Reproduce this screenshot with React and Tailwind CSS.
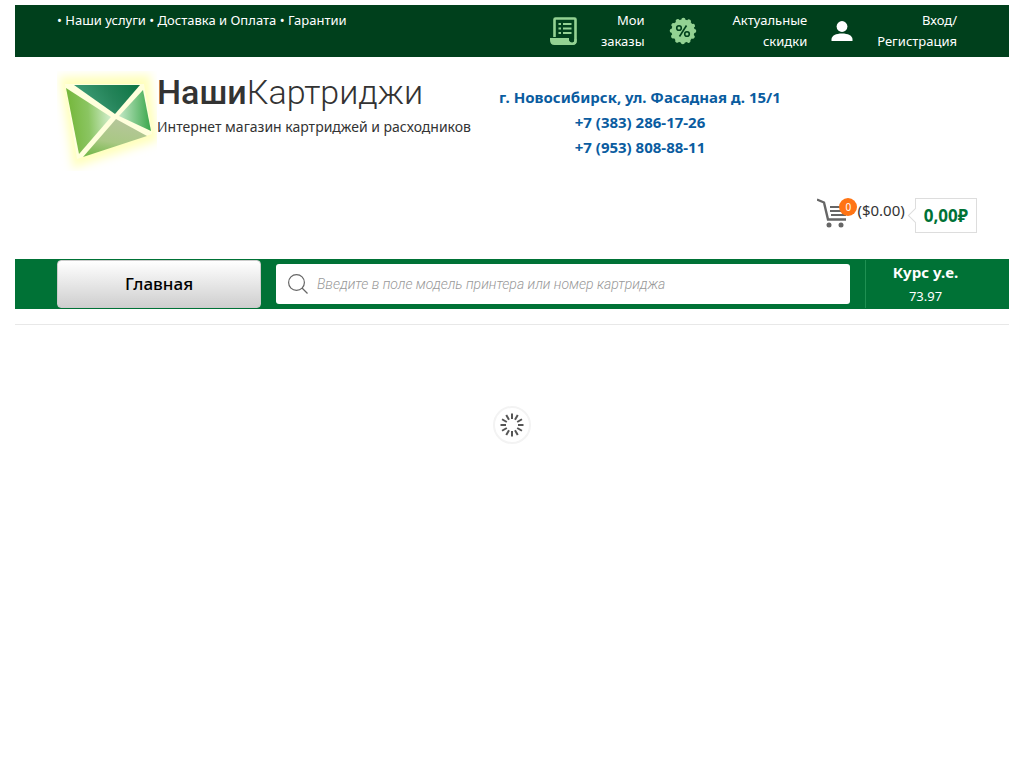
import React from "react";

const OrdersIcon = () => (
  <svg className="w-[27px] h-7 shrink-0" viewBox="0 0 27 28" fill="none" aria-hidden="true">
    <path d="M4.5 20V2.5Q4.500 1.500 5.500 1.500H24.500Q25.500 1.500 25.500 2.500V24Q25.500 26.500 23 26.500" stroke="#93d293" strokeWidth="2.600" />
    <path d="M0 21H19V23.500Q20 25.500 22 25.500Q24.500 25.500 24.500 22H26.500V24Q26.500 28 22.500 28H4.500Q0 28 0 23Z" fill="#93d293" />
    <path d="M8.500 7H11M8.500 11.500H11M8.500 16H11M13 7H21.500M13 11.500H21.500M13 16H21.500" stroke="#93d293" strokeWidth="2.200" />
  </svg>
);

const DiscountIcon = () => (
  <svg className="w-7 h-7 shrink-0" viewBox="0 0 28 28" fill="none" aria-hidden="true">
    <circle cx="14" cy="14" r="11.500" fill="#93d293" />
    <circle cx="14" cy="14" r="11.300" stroke="#93d293" strokeWidth="4" strokeLinecap="round" strokeDasharray="0.1 5.817" />
    <circle cx="10" cy="11" r="2.300" stroke="#00401c" strokeWidth="1.600" />
    <circle cx="18" cy="17" r="2.300" stroke="#00401c" strokeWidth="1.600" />
    <path d="M17.500 8.500L10.500 19.500" stroke="#00401c" strokeWidth="1.600" />
  </svg>
);

const UserIcon = () => (
  <svg className="w-[22px] h-5 shrink-0" viewBox="0 0 22 20" fill="#fff" aria-hidden="true">
    <circle cx="11" cy="5.500" r="5.400" />
    <path d="M0.500 20V18.500C0.500 14.500 5 12.500 11 12.500S21.500 14.500 21.500 18.500V20Z" />
  </svg>
);

const Logo = () => (
  <svg className="w-[100px] h-[100px] shrink-0" viewBox="0 0 100 100" aria-hidden="true">
    <defs>
      <filter id="glow" x="-20%" y="-20%" width="140%" height="140%">
        <feGaussianBlur stdDeviation="4" />
      </filter>
      <linearGradient id="top" x1="0" y1="0.300" x2="1" y2="0">
        <stop offset="0" stopColor="#3f9f78" />
        <stop offset="0.500" stopColor="#25845a" />
        <stop offset="1" stopColor="#0c7543" />
      </linearGradient>
      <linearGradient id="left" x1="0" y1="0.500" x2="1" y2="0.400">
        <stop offset="0" stopColor="#72b536" />
        <stop offset="0.500" stopColor="#8bc562" />
        <stop offset="1" stopColor="#d4efd0" />
      </linearGradient>
      <linearGradient id="right" x1="0" y1="0.500" x2="1" y2="0.500">
        <stop offset="0" stopColor="#c2e8c5" />
        <stop offset="1" stopColor="#3aa64b" />
      </linearGradient>
      <linearGradient id="bottom" x1="0.600" y1="0" x2="0.300" y2="1">
        <stop offset="0" stopColor="#b6c69b" />
        <stop offset="0.600" stopColor="#a9c884" />
        <stop offset="1" stopColor="#77b94c" />
      </linearGradient>
    </defs>
    <path d="M5 8L91 6L98 68L18 94Z" fill="#ffffb8" stroke="#ffffc8" strokeWidth="6" filter="url(#glow)" />
    <path d="M8 13H87L95 63L20 88Z" fill="#ffffdc" />
    <path d="M17 14H83L58 43Z" fill="url(#top)" />
    <path d="M9 17L54 46L22 83Z" fill="url(#left)" />
    <path d="M86 19L94 60L62 45Z" fill="url(#right)" />
    <path d="M59 48L90 65L26 86Z" fill="url(#bottom)" />
  </svg>
);

const CartIcon = () => (
  <svg className="w-8 h-[30px]" viewBox="0 0 32 30" fill="none" stroke="#666" strokeWidth="2" aria-hidden="true">
    <path d="M0 1.500L7 4.500L11 21.500H29" strokeWidth="2.400" />
    <path d="M13 9H29M13 13H29M14 17H29" />
    <circle cx="12" cy="27" r="2.500" fill="#666" stroke="none" />
    <circle cx="24" cy="27" r="2.500" fill="#666" stroke="none" />
  </svg>
);

const SearchIcon = () => (
  <svg className="w-5 h-5 shrink-0" viewBox="0 0 20 20" fill="none" stroke="#666" strokeWidth="1.200" aria-hidden="true">
    <circle cx="8.500" cy="8.500" r="7.900" />
    <path d="M14 14L19.500 19.500" />
  </svg>
);

const spokes = [0, 30, 60, 90, 120, 150, 180, 210, 240, 270, 300, 330];

const Spinner = () => (
  <div className="w-[38px] h-[38px] rounded-full border-2 border-[#f3f3f3] flex items-center justify-center" role="status" aria-label="Загрузка">
    <svg className="w-6 h-6" viewBox="0 0 24 24" stroke="#555" strokeWidth="2">
      {spokes.map((angle) => (
        <path key={angle} d="M12 0.500V6" transform={`rotate(${angle} 12 12)`} />
      ))}
    </svg>
  </div>
);

const TopBar = () => (
  <div className="bg-[#00401c] text-white text-[13px] leading-[21px] py-[5px] pl-[42px] pr-[52px] flex justify-between">
    <nav>
      • <a href="#services">Наши услуги</a> • <a href="#delivery">Доставка и Оплата</a> •{" "}
      <a href="#warranty">Гарантии</a>
    </nav>
    <div className="flex items-center gap-6 text-right">
      <a href="#orders" className="flex items-center gap-6">
        <OrdersIcon />
        <span>Мои<br />заказы</span>
      </a>
      <a href="#discounts" className="flex items-center gap-9">
        <DiscountIcon />
        <span>Актуальные<br />скидки</span>
      </a>
      <a href="#login" className="flex items-center gap-6">
        <UserIcon />
        <span>Вход/<br />Регистрация</span>
      </a>
    </div>
  </div>
);

const Header = () => (
  <header className="pt-[14px] pl-[42px] pr-8">
    <div className="flex items-start">
      <a href="#home" className="flex items-start w-[423px] shrink-0 text-[#333]">
        <Logo />
        <span className="pt-1 whitespace-nowrap">
          <span className="block text-[34px] leading-[34px] font-[Roboto] font-light">
            <b className="font-medium">Наши</b>Картриджи
          </span>
          <span className="block pt-2 text-[14px] leading-5">Интернет магазин картриджей и расходников</span>
        </span>
      </a>
      <address className="not-italic w-80 pt-[14px] text-center text-[15px] leading-[25px] font-bold text-[#0a5ca0] whitespace-nowrap">
        <p>г. Новосибирск, ул. Фасадная д. 15/1</p>
        <p><a href="tel:+73832861726">+7 (383) 286-17-26</a></p>
        <p><a href="tel:+79538088811">+7 (953) 808-88-11</a></p>
      </address>
    </div>
    <div className="flex justify-end pt-[27px] pb-[26px]">
      <a href="#cart" className="flex items-start">
        <span className="relative w-10">
          <CartIcon />
          <span className="absolute right-0 top-0 w-[18px] h-[18px] rounded-full bg-[#ff7414] text-white text-[10px] leading-[18px] text-center">0</span>
        </span>
        <span className="text-[15px] leading-6 text-[#333]">($0.00)</span>
        <span className="relative ml-[10px] h-[35px] px-2 border border-[#ddd] text-[#007236] text-[17px] leading-[33px] font-bold">
          <span className="absolute -left-[6px] top-[11px] w-[11px] h-[11px] rotate-45 bg-white border-l border-b border-[#ddd]" />
          0,00₽
        </span>
      </a>
    </div>
  </header>
);

const MainNav = () => (
  <div className="bg-[#007236] h-[50px] pl-[42px] flex items-center">
    <button className="w-[204px] h-12 shrink-0 rounded border border-[#ccc] bg-linear-to-b from-white to-[#cfcfcf] text-black text-[17px] font-medium">
      Главная
    </button>
    <form className="flex-1 mx-[15px] h-10 bg-white rounded-[3px] flex items-center pl-3 gap-[9px]">
      <SearchIcon />
      <input
        type="search"
        aria-label="Поиск"
        placeholder="Введите в поле модель принтера или номер картриджа"
        className="flex-1 min-w-0 h-full outline-none font-[Roboto] font-light italic text-[14px] text-[#333] placeholder:text-[#999]"
      />
    </form>
    <div className="w-36 h-12 shrink-0 border-l border-[#1f9052] pr-6 text-center text-white leading-6">
      <p className="font-bold text-[15px]">Курс у.е.</p>
      <p className="text-[13px]">73.97</p>
    </div>
  </div>
);

const App = () => {
  return (
    <div className="mx-[15px] pt-[5px] font-['Noto_Sans',sans-serif]">
      <TopBar />
      <Header />
      <MainNav />
      <main className="mt-[15px] border-t border-[#e8e8e8] pt-[81px] flex justify-center">
        <Spinner />
      </main>
    </div>
  );
};

export default App;
